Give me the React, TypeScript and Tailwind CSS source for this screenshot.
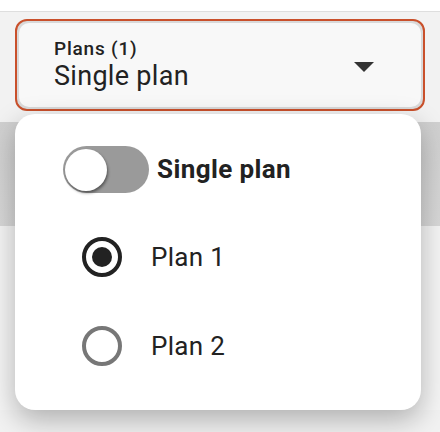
import React from "react"

const PlanRadio = ({ label, checked }: { label: string; checked?: boolean }) => (
  <div className="flex items-center h-[40px]">
    <div
      className={`w-[40px] h-[40px] rounded-full border-[4px] flex items-center justify-center ${
        checked ? "border-[#222222]" : "border-[#777777]"
      }`}
    >
      {checked && <div className="w-[20px] h-[20px] rounded-full bg-[#222222]" />}
    </div>
    <span className="ml-[29px] text-[26px] text-[#222222] tracking-[0.3px]">{label}</span>
  </div>
)

export default function App() {
  return (
    <div
      className="relative w-[440px] h-[432px] overflow-hidden bg-[#f2f2f2]"
      style={{ fontFamily: "Roboto, 'Liberation Sans', sans-serif" }}
    >
      <div className="h-[12px] bg-white border-b border-[#dedede]" />

      <div className="mx-[15px] mt-[7px] h-[92px] rounded-[12px] border-2 border-[#c9502b] p-[2px] bg-[#d9d9d9]">
        <div className="h-full rounded-[10px] bg-[#f8f8f8] flex items-center pl-[35px] pr-[47px]">
          <div className="flex-1 flex flex-col">
            <span className="text-[19px] font-medium text-[#222222] leading-[22px] tracking-[0.8px]">Plans (1)</span>
            <span className="text-[27px] text-[#222222] leading-[32px] tracking-[0.3px]">Single plan</span>
          </div>
          <svg width="20" height="10" viewBox="0 0 20 10" className="mt-[4px]">
            <path d="M0 0 L20 0 L10 10 Z" fill="#333333" />
          </svg>
        </div>
      </div>

      <div className="mt-[11px] h-[104px] bg-gradient-to-b from-[#d0d0d0] to-[#d8d8d8]" />
      <div className="h-[184px] bg-[#f5f5f5] flex justify-end items-end pr-[54px]">
        <div className="w-[34px] h-[24px] border-x-2 border-[#cfcfcf] bg-[#d6d6d6]" />
      </div>

      <div className="absolute left-[15px] top-[114px] w-[406px] h-[296px] rounded-[20px] bg-white shadow-[0_10px_28px_rgba(0,0,0,0.28)] flex flex-col">
        <div className="flex items-center pl-[48px] pt-[32px]">
          <div className="w-[86px] h-[47px] rounded-full bg-[#9a9a9a] flex items-center pl-[2px]">
            <div className="w-[42px] h-[42px] rounded-full bg-white shadow-[1px_2px_3px_rgba(0,0,0,0.45)]" />
          </div>
          <span className="ml-[8px] text-[26px] font-bold text-[#222222] tracking-[0.4px]">Single plan</span>
        </div>
        <div className="flex flex-col gap-[49px] pl-[67px] pt-[44px]">
          <PlanRadio label="Plan 1" checked />
          <PlanRadio label="Plan 2" />
        </div>
      </div>
    </div>
  )
}
